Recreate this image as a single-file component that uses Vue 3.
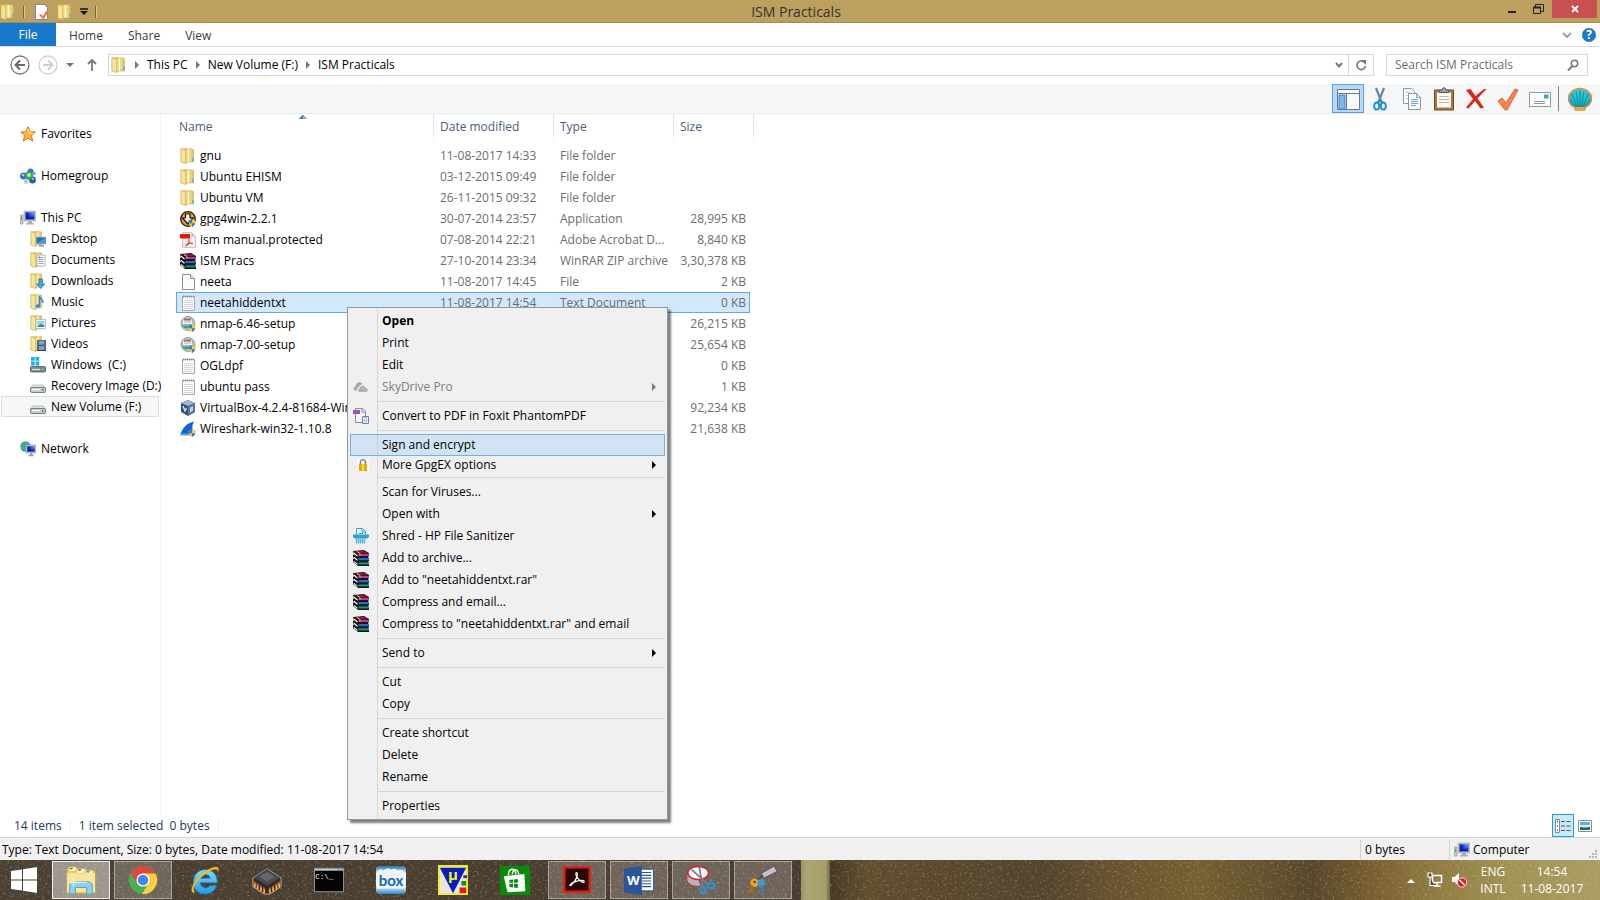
<script setup>
import { ref } from 'vue'

const search = ref('')
const selected = ref('neetahiddentxt')

const crumbs = ['This PC', 'New Volume (F:)', 'ISM Practicals']

const tools = [
  { icon: 't-layout', label: 'Layout', on: true },
  { icon: 't-cut', label: 'Cut' },
  { icon: 't-copy', label: 'Copy' },
  { icon: 't-paste', label: 'Paste' },
  { icon: 't-delete', label: 'Delete' },
  { icon: 't-check', label: 'Properties' },
  { icon: 't-mail', label: 'E-mail' }
]

const tree = [
  { name: 'Favorites', icon: 'star', group: true },
  { name: 'Homegroup', icon: 'homegroup', group: true },
  { name: 'This PC', icon: 'pc', group: true },
  { name: 'Desktop', icon: 'f-desktop' },
  { name: 'Documents', icon: 'f-docs' },
  { name: 'Downloads', icon: 'f-down' },
  { name: 'Music', icon: 'f-music' },
  { name: 'Pictures', icon: 'f-pics' },
  { name: 'Videos', icon: 'f-video' },
  { name: 'Windows  (C:)', icon: 'drive-win' },
  { name: 'Recovery Image (D:)', icon: 'drive' },
  { name: 'New Volume (F:)', icon: 'drive', current: true },
  { name: 'Network', icon: 'network', group: true }
]

const files = [
  { name: 'gnu', icon: 'folder', date: '11-08-2017 14:33', type: 'File folder', size: '' },
  { name: 'Ubuntu EHISM', icon: 'folder', date: '03-12-2015 09:49', type: 'File folder', size: '' },
  { name: 'Ubuntu VM', icon: 'folder', date: '26-11-2015 09:32', type: 'File folder', size: '' },
  { name: 'gpg4win-2.2.1', icon: 'gpg', date: '30-07-2014 23:57', type: 'Application', size: '28,995 KB' },
  { name: 'ism manual.protected', icon: 'pdf', date: '07-08-2014 22:21', type: 'Adobe Acrobat D...', size: '8,840 KB' },
  { name: 'ISM Pracs', icon: 'rar', date: '27-10-2014 23:34', type: 'WinRAR ZIP archive', size: '3,30,378 KB' },
  { name: 'neeta', icon: 'file', date: '11-08-2017 14:45', type: 'File', size: '2 KB' },
  { name: 'neetahiddentxt', icon: 'text', date: '11-08-2017 14:54', type: 'Text Document', size: '0 KB' },
  { name: 'nmap-6.46-setup', icon: 'nmap', date: '', type: '', size: '26,215 KB' },
  { name: 'nmap-7.00-setup', icon: 'nmap', date: '', type: '', size: '25,654 KB' },
  { name: 'OGLdpf', icon: 'text', date: '', type: '', size: '0 KB' },
  { name: 'ubuntu pass', icon: 'text', date: '', type: '', size: '1 KB' },
  { name: 'VirtualBox-4.2.4-81684-Win', icon: 'vbox', date: '', type: '', size: '92,234 KB' },
  { name: 'Wireshark-win32-1.10.8', icon: 'shark', date: '', type: '', size: '21,638 KB' }
]

const menu = [
  [
    { label: 'Open', bold: true },
    { label: 'Print' },
    { label: 'Edit' },
    { label: 'SkyDrive Pro', icon: 'cloud', sub: true, disabled: true }
  ],
  [{ label: 'Convert to PDF in Foxit PhantomPDF', icon: 'foxit' }],
  [
    { label: 'Sign and encrypt', active: true },
    { label: 'More GpgEX options', icon: 'lock', sub: true, short: true }
  ],
  [
    { label: 'Scan for Viruses...' },
    { label: 'Open with', sub: true },
    { label: 'Shred - HP File Sanitizer', icon: 'shred' },
    { label: 'Add to archive...', icon: 'rar' },
    { label: 'Add to "neetahiddentxt.rar"', icon: 'rar' },
    { label: 'Compress and email...', icon: 'rar' },
    { label: 'Compress to "neetahiddentxt.rar" and email', icon: 'rar' }
  ],
  [{ label: 'Send to', sub: true }],
  [{ label: 'Cut' }, { label: 'Copy' }],
  [{ label: 'Create shortcut' }, { label: 'Delete' }, { label: 'Rename' }],
  [{ label: 'Properties' }]
]

const apps = [
  { icon: 'a-explorer', label: 'File Explorer', state: 'front' },
  { icon: 'a-chrome', label: 'Chrome', state: 'open' },
  { icon: 'a-ie', label: 'Internet Explorer' },
  { icon: 'a-chip', label: 'Chip' },
  { icon: 'a-cmd', label: 'Command Prompt', text: 'C:\\_', x: 11, y: 15, cls: 'txt-cmd' },
  { icon: 'a-box', label: 'Box', text: 'box', x: 16, y: 22, cls: 'txt-box' },
  { icon: 'a-mu', label: 'uVision', text: 'µ', x: 16, y: 16, cls: 'txt-mu' },
  { icon: 'a-store', label: 'Store' },
  { icon: 'a-acrobat', label: 'Acrobat', state: 'open' },
  { icon: 'a-word', label: 'Word', state: 'open', text: 'W', x: 10, y: 21, cls: 'txt-word' },
  { icon: 'a-snip', label: 'Snipping Tool', state: 'open' },
  { icon: 'a-keys', label: 'Kleopatra', state: 'open' }
]
</script>

<template>
  <div class="screen">
    <!-- icon sprite -->
    <svg class="sprite" width="0" height="0" aria-hidden="true">
      <defs>
        <linearGradient id="gFolder" x1="0" y1="0" x2="1" y2="0">
          <stop offset="0" stop-color="#dcbf5c" />
          <stop offset=".35" stop-color="#f8e9a2" />
          <stop offset="1" stop-color="#dcbf5c" />
        </linearGradient>
        <linearGradient id="gShell" x1="0" y1="0" x2="0" y2="1">
          <stop offset="0" stop-color="#35cfdc" />
          <stop offset="1" stop-color="#12a3b8" />
        </linearGradient>
        <linearGradient id="gIe" x1="0" y1="0" x2="0" y2="1">
          <stop offset="0" stop-color="#7fdcff" />
          <stop offset="1" stop-color="#1b9ce4" />
        </linearGradient>
        <linearGradient id="gBox" x1="0" y1="0" x2="0" y2="1">
          <stop offset="0" stop-color="#1c74b8" />
          <stop offset=".3" stop-color="#fff" />
          <stop offset=".75" stop-color="#d9eaf6" />
          <stop offset="1" stop-color="#2a85c7" />
        </linearGradient>
        <radialGradient id="gScreen" cx=".8" cy=".2" r="1">
          <stop offset="0" stop-color="#5c8cf5" />
          <stop offset=".6" stop-color="#0f1fc4" />
          <stop offset="1" stop-color="#0a1490" />
        </radialGradient>
      </defs>
      <symbol id="folder" viewBox="0 0 16 16">
        <path d="M1 .8h5.500v14.400L1 14z" fill="#ecd480" stroke="#cdae4a" stroke-width=".6" />
        <path d="M5 .8h7l1.500 1V14H5z" fill="url(#gFolder)" stroke="#cdae4a" stroke-width=".6" />
        <path d="M1 .8l4.500 1.700v13L1 14z" fill="#f6e59c" stroke="#d2b454" stroke-width=".6" />
        <path d="M8.500 1.500v12" stroke="#fff8d6" />
        <path d="M13 9.500v4" stroke="#45a7e6" stroke-width="1.200" />
      </symbol>
      <symbol id="star" viewBox="0 0 16 16">
        <path d="M8 .7l2.200 5 5.200.4-4 3.500 1.300 5.400L8 12.100 3.300 15l1.300-5.400-4-3.500 5.200-.4z" fill="#fdb53a" stroke="#d9761a" />
        <path d="M8 3l1.300 4 4 .3" stroke="#ffe9a0" fill="none" />
      </symbol>
      <symbol id="homegroup" viewBox="0 0 16 16">
        <circle cx="3.500" cy="8" r="3.500" fill="#3a6fd0" /><circle cx="12.500" cy="12" r="3.400" fill="#2c55b8" />
        <circle cx="10.500" cy="3.500" r="3" fill="#3a78c8" /><circle cx="6" cy="13.500" r="2.300" fill="#a9c8ee" />
        <circle cx="9" cy="7.500" r="4.200" fill="#2fab3e" /><circle cx="9" cy="7" r="2" fill="#c4f0b5" />
        <circle cx="3" cy="7" r="1.300" fill="#a9c8f8" /><circle cx="13" cy="11" r="1.200" fill="#8fb0ef" />
        <circle cx="14" cy="5.500" r="1.800" fill="#6fa0e6" />
      </symbol>
      <symbol id="pc" viewBox="0 0 16 16">
        <path d="M0 5h3v9H0z" fill="#c9ced2" stroke="#878d92" stroke-width=".6" /><path d="M1 6.500h1v4H1z" fill="#39c239" />
        <path d="M4 1h12v10H4z" fill="#c8ccd1" stroke="#9aa0a6" stroke-width=".6" />
        <path d="M5.500 2.300h9v7.200h-9z" fill="url(#gScreen)" /><path d="M8 11h4v2h2v1.500H6V13h2z" fill="#a9aeb4" />
      </symbol>
      <symbol id="network" viewBox="0 0 16 16">
        <circle cx="5.500" cy="5.500" r="5.200" fill="#2f9fe0" /><path d="M2 2c3-2 5 0 3 2s1 4-1 6S0 6 2 2z" fill="#3cb54a" />
        <path d="M6 4h10v8H6z" fill="#c8ccd1" stroke="#8d9399" stroke-width=".6" /><path d="M7.200 5.200h7.600v5.500H7.200z" fill="url(#gScreen)" />
        <path d="M10 12h2.500v2H14v1.300H8.500V14H10z" fill="#9aa0a6" />
      </symbol>
      <symbol id="half" viewBox="0 0 16 16">
        <path d="M1 .8h5.500v14.400L1 14z" fill="#ecd480" stroke="#cdae4a" stroke-width=".6" />
        <path d="M5 .8h6.500V14H5z" fill="url(#gFolder)" stroke="#cdae4a" stroke-width=".6" />
        <path d="M1 .8l4.500 1.700v13L1 14z" fill="#f6e59c" stroke="#d2b454" stroke-width=".6" />
      </symbol>
      <symbol id="f-desktop" viewBox="0 0 16 16">
        <use href="#half" /><path d="M6 6h10v7H6z" fill="#2f6fb2" stroke="#b9c6d4" stroke-width=".8" /><path d="M7 12l8-5v5z" fill="#4f96d8" /><path d="M9 14h5v1.500H9z" fill="#8a949e" />
      </symbol>
      <symbol id="f-docs" viewBox="0 0 16 16">
        <use href="#half" /><path d="M7 3h8v11H7z" fill="#fff" stroke="#8d99a6" stroke-width=".7" /><path d="M8.500 7.500h5M8.500 9.500h5M8.500 11.500h5M11 5.500h2.500" stroke="#7d9cc0" stroke-width=".9" /><path d="M8.500 4.500h2v2h-2z" fill="#3f8ad6" />
      </symbol>
      <symbol id="f-down" viewBox="0 0 16 16">
        <use href="#half" /><path d="M9 6h3.500v5H15l-4.300 4.500L6.500 11H9z" fill="#3ba5ea" stroke="#1b6fb5" stroke-width=".7" />
      </symbol>
      <symbol id="f-music" viewBox="0 0 16 16">
        <use href="#half" /><path d="M9.500 2v9M9.500 3c1 2 4 2 3.500 6" stroke="#2c8de0" stroke-width="1.600" fill="none" /><ellipse cx="8" cy="12" rx="2.300" ry="1.800" fill="#2c8de0" />
      </symbol>
      <symbol id="f-pics" viewBox="0 0 16 16">
        <use href="#half" /><path d="M6 4.500h9.500v9H6z" fill="#fff" stroke="#9aa7b3" stroke-width=".7" /><path d="M7.300 6h7v6h-7z" fill="#8fd0f5" /><path d="M7.300 12l3-3 4 1.500V12z" fill="#3f8f6b" />
      </symbol>
      <symbol id="f-video" viewBox="0 0 16 16">
        <use href="#half" /><path d="M7 4h9v11H7z" fill="#333c46" /><path d="M9 4.500h5v4.300H9zM9 9.800h5V14H9z" fill="#6fa6d8" /><path d="M8 4.500v10M15 4.500v10" stroke="#fff" stroke-width=".9" stroke-dasharray="1 1" />
      </symbol>
      <symbol id="drive" viewBox="0 0 16 16">
        <path d="M3 7h10l2.500 3H.5z" fill="#dfe1e3" stroke="#9fa3a7" stroke-width=".6" /><rect x=".5" y="9.500" width="15" height="5" rx="1.500" fill="#c9cccf" stroke="#6f7478" stroke-width=".9" />
        <path d="M2 11.500h8" stroke="#f5f5f5" stroke-width="1.200" /><path d="M12 11h1.600v2H12z" fill="#22b422" />
      </symbol>
      <symbol id="drive-win" viewBox="0 0 16 16">
        <rect x=".5" y="9.500" width="15" height="5.500" rx="1" fill="#7f8b93" stroke="#4c565d" stroke-width=".8" /><path d="M2 12.500h8" stroke="#cfe3ec" stroke-width="1.200" /><path d="M12 11.500h1.600v2H12z" fill="#3adf5a" />
        <path d="M1 0h3.700v3.800H1zM5.500 0h3.700v3.800H5.500zM1 4.600h3.700v3.800H1zM5.500 4.600h3.700v3.800H5.500z" fill="#17b5ee" />
      </symbol>
      <symbol id="gpg" viewBox="0 0 16 16">
        <circle cx="8" cy="8" r="7.300" fill="#f39a1d" stroke="#1d1508" stroke-width="1.300" /><path d="M5.500 3h4.500v4h3l-5.200 6L2.500 7h3z" fill="#fff" stroke="#111" stroke-width="1.200" />
        <use href="#shield" />
      </symbol>
      <symbol id="shield" viewBox="0 0 16 16">
        <path d="M12 8.500l3.500 1c0 3-1 5-3.500 6.400-2.500-1.400-3.500-3.400-3.500-6.400z" fill="#f7c52c" /><path d="M12 8.500v3.700H8.800c-.2-.9-.3-1.700-.3-2.700zM12 12.200h3.200c-.5 1.700-1.500 2.800-3.200 3.700z" fill="#2d7fd8" />
      </symbol>
      <symbol id="pdf" viewBox="0 0 16 16">
        <path d="M2.500.5h9L15.500 4.500v11h-13z" fill="#efefef" stroke="#c8c8c8" /><path d="M11.500.5v4h4z" fill="#bdbdbd" /><path d="M0 2h10v4.500H0z" fill="#e0170e" />
        <path d="M8.800 7c1 4-1 6-2.800 6.500 1-2.500 5-2.800 7-2" stroke="#e0352a" fill="none" stroke-width="1.200" />
      </symbol>
      <symbol id="rar" viewBox="0 0 16 16">
        <path d="M0 1l11-1 5 3v3l-1 1 1 2v2l-1 1 1 1v3H5L0 12V9l1-.5L0 7V5l1-.5z" fill="#15151a" />
        <path d="M1 1.500L11 .6 15 3H5z" fill="#8b1247" /><path d="M5.500 3.800H16v2.200H5.500z" fill="#c4398a" /><path d="M5.500 8H16v2.200H5.500z" fill="#1f6fc9" /><path d="M5.500 12.400H16v2H5.500z" fill="#12a06a" />
        <path d="M.8 3l3.700 3M.8 7.300l3.700 3M.8 11.400l3.700 3" stroke="#fff" stroke-width="1.100" /><path d="M4 1.500l3 2v2" stroke="#e6d430" fill="none" />
      </symbol>
      <symbol id="file" viewBox="0 0 16 16">
        <path d="M2.500.5h8L14.500 4.500v11h-12z" fill="#fcfcfc" stroke="#8e8e8e" /><path d="M10.500.5v4h4" fill="#eee" stroke="#8e8e8e" />
      </symbol>
      <symbol id="text" viewBox="0 0 16 16">
        <path d="M2.500 1.500h12v14h-12z" fill="#fbfbfb" stroke="#a8a8a8" /><path d="M4 5.500h9M4 7.500h9M4 9.500h9M4 11.500h9M4 13.500h9" stroke="#c5cbd0" stroke-width=".8" /><path d="M3 1.500h11" stroke="#8b8b8b" stroke-width="2" stroke-dasharray="1 1" />
      </symbol>
      <symbol id="nmap" viewBox="0 0 16 16">
        <circle cx="8" cy="7.500" r="7" fill="#b9cfc3" stroke="#8aa5a0" /><path d="M3 2.500h9l1 6H2z" fill="#f4f6f4" stroke="#8d9a9f" stroke-width=".7" /><path d="M4 3.800h7" stroke="#b33d32" stroke-width="1.300" /><path d="M4 6h7" stroke="#a9b2b5" /><path d="M2 9.500h8c-1 4-6 4-8 0z" fill="#3f9f83" /><use href="#shield" />
      </symbol>
      <symbol id="vbox" viewBox="0 0 16 16">
        <path d="M1 3l7-3 7 3v9l-7 4-7-4z" fill="#33527f" /><path d="M1 3l7-3 7 3-7 3z" fill="#a3b6cf" /><path d="M8 6v10l7-4V3z" fill="#5977a3" /><path d="M3 6l2 5 1.500-3" stroke="#e3ebf5" fill="none" stroke-width="1.300" /><path d="M10 7.500v5l3-2v-4z" fill="#c6d4e6" />
      </symbol>
      <symbol id="shark" viewBox="0 0 16 16">
        <path d="M.5 14C2 7 7 2 14 .5c-2.500 4-2 9 1 13.500z" fill="#1462d6" /><path d="M.5 12.500h14v2H.5z" fill="#4aa8ef" /><use href="#shield" />
      </symbol>
      <symbol id="cloud" viewBox="0 0 16 16">
        <path d="M3 11.500c-3 0-3.200-3.600-.6-4C3 3 7.500 2 9.500 5 6 6 6.500 8 5 8.500 3.800 9 3.700 11 4.500 11.500z" fill="#a8a8a8" /><path d="M6.500 13c-2.200-.4-2-3 .2-3.500C7 6 11.500 5.500 12.500 8.700c3 0 3 4.300.5 4.300z" fill="#b2b2b2" />
      </symbol>
      <symbol id="foxit" viewBox="0 0 16 16">
        <path d="M2.500.5h7L12.500 3v11.500h-10z" fill="#f4f4f8" stroke="#8c8ca0" /><path d="M9 1v3h3.500" fill="none" stroke="#8c8ca0" /><path d="M0 2h7v4H0z" fill="#9d52ac" /><path d="M9.500 8.500h6v7h-6z" fill="#e9edf5" stroke="#7484a3" /><path d="M11 8h3v1.500h-3z" fill="#7484a3" /><path d="M11.500 11v3M13.500 11v3" stroke="#a9b3c9" />
      </symbol>
      <symbol id="lock" viewBox="0 0 16 16">
        <path d="M4 2h12v12H4z" fill="#fafafa" /><path d="M7.500 8V5c0-3 5-3 5 0v3" fill="none" stroke="#8d8d8d" stroke-width="1.600" /><path d="M6 7h8v7H6z" fill="#e2a90c" /><path d="M9 7h2v7H9z" fill="#f9d640" />
      </symbol>
      <symbol id="shred" viewBox="0 0 16 16">
        <path d="M3.500 6.500v-6h6l3 3v3" fill="#e9f6fc" stroke="#2aa2d6" /><path d="M9 1v3h3" fill="none" stroke="#2aa2d6" /><path d="M6 5.500h4" stroke="#2aa2d6" /><path d="M0 6.500h16V9l-2 1.500H2L0 9z" fill="#2aa2d6" /><path d="M3.500 10.500v5M5.500 10.500v5M7.500 10.500v5M9.500 10.500v5M11.500 10.500v5" stroke="#58b8e0" stroke-width="1.500" />
      </symbol>

      <symbol id="t-layout" viewBox="0 0 24 24">
        <path d="M1.500 2.500h22v20h-22z" fill="#f7f9fb" stroke="#6b7784" /><path d="M2 6.500h21" stroke="#6b7784" /><path d="M3 8h6v14H3z" fill="#7db8f3" stroke="#3d83d1" /><path d="M10.500 7v15" stroke="#6b7784" />
      </symbol>
      <symbol id="t-cut" viewBox="0 0 24 24">
        <path d="M8 1l5.500 14M16 1l-5.500 14" stroke="#6d879f" stroke-width="2.200" /><ellipse cx="8.700" cy="19" rx="2.500" ry="3.500" fill="none" stroke="#1d94dc" stroke-width="2" /><ellipse cx="15.300" cy="19" rx="2.500" ry="3.500" fill="none" stroke="#1d94dc" stroke-width="2" /><path d="M9.500 16l2.500-3 2.500 3" stroke="#1d94dc" stroke-width="2" fill="none" />
      </symbol>
      <symbol id="t-copy" viewBox="0 0 24 24">
        <path d="M3.500 1.500h8l3 3v12h-11z" fill="#fbfcfd" stroke="#8a99a8" /><path d="M6 5.500h4M6 8.500h6M6 11.500h6" stroke="#b5c2cf" /><path d="M8.500 6.500h8l4 4v12h-12z" fill="#fbfcfd" stroke="#8a99a8" /><path d="M16.500 6.500v4h4" fill="none" stroke="#8a99a8" /><path d="M11 12.500h7M11 14.500h7M11 16.500h7M11 18.500h5" stroke="#6fa5d8" />
      </symbol>
      <symbol id="t-paste" viewBox="0 0 24 24">
        <path d="M2.500 3h19v20h-19z" fill="#a8783c" stroke="#6e4a1d" /><path d="M5 5.500h14v15H5z" fill="#fdf9ee" /><path d="M7 9.500h10M7 12.500h10M7 15.500h10" stroke="#b9b9b9" /><path d="M7 5.500V3h3c0-3 4-3 4 0h3v2.500z" fill="#9ba3a8" stroke="#555d62" />
      </symbol>
      <symbol id="t-delete" viewBox="0 0 24 24">
        <path d="M2 3l4.500-1 5 7L20 2h2.500l-9 9.500 6.500 9-3.500 1-5.500-7.500-6.500 7.500L2 20.500l7-8.500z" fill="#d8281b" />
      </symbol>
      <symbol id="t-check" viewBox="0 0 24 24">
        <path d="M2 14l4-3 4 5L19 2l3 1-11 20H9z" fill="#f28550" stroke="#dc6730" />
      </symbol>
      <symbol id="t-mail" viewBox="0 0 24 24">
        <path d="M1.500 5.500h21v14h-21z" fill="#fdfdfd" stroke="#8e979f" /><path d="M16 7.500h4.500v4H16z" fill="#3ca6c9" /><path d="M6 14.500h11M6 16.500h11" stroke="#8e979f" />
      </symbol>
      <symbol id="t-shell" viewBox="0 0 24 24">
        <path d="M12 1.500C19 1.500 24 7 23.500 12c-.3 4-3 7-6 8l-1 3h-9l-1-3C3 19 .8 16 .5 12 0 7 5 1.500 12 1.500z" fill="url(#gShell)" stroke="#f08a35" stroke-width="1.400" />
        <path d="M12 3v17M8 4l2.500 16M4 7l5 13M1.500 12l6 8M16 4l-2.500 16M20 7l-5 13M22.500 12l-6 8" stroke="#0e8496" stroke-width=".8" fill="none" /><path d="M7 20h10l-1 3H8z" fill="#f3a04c" />
      </symbol>

      <symbol id="a-explorer" viewBox="0 0 32 32">
        <path d="M1 4h9l2 2h19v24H1z" fill="#f0d67a" stroke="#caa640" /><path d="M3 2h8v5H3zM11 4h10v5H11zM20 6h9v5h-9z" fill="#fff3bd" stroke="#d5b85a" stroke-width=".7" />
        <path d="M4 3h3v1.500H4z" fill="#20a030" /><path d="M13 4.500h3V6h-3z" fill="#d33" /><path d="M22 6.500h3V8h-3z" fill="#28d" /><path d="M1 9h30v20H1z" fill="#f9e9a3" opacity=".85" />
        <path d="M4 31v-9c0-3 2-4 5-4h14c3 0 5 1 5 4v9h-6v-7H10v7z" fill="#8fd0ee" stroke="#4c9fc9" /><path d="M5 20c1-1 2-1.500 4-1.500h13" stroke="#e4f6ff" fill="none" /><path d="M8 14v9M3.500 18.500h9" stroke="#fff" />
      </symbol>
      <symbol id="a-chrome" viewBox="0 0 32 32">
        <circle cx="16" cy="16" r="15" fill="#4bae50" />
        <path d="M16 16L3 8.500A15 15 0 0 1 29 8.500z" fill="#dc4a3d" />
        <path d="M16 9h13.300A15 15 0 0 1 15 31l7.200-12z" fill="#fccd3f" />
        <path d="M3 8.500l6.800 11.300L12 10z" fill="#dc4a3d" />
        <circle cx="16" cy="16" r="7" fill="#fff" /><circle cx="16" cy="16" r="5.600" fill="#4286f0" />
      </symbol>
      <symbol id="a-ie" viewBox="0 0 32 32">
        <path d="M29 19H11c.3 6 8 7 10 3h7c-2 6-6 9-12 9C8 31 3 25 3.500 18 4 10 9 5 16 5c9 0 13.500 6 13 14zM11 14h10.500c-.3-5-10-5-10.500 0z" fill="url(#gIe)" stroke="#147ec4" stroke-width=".8" />
        <path d="M4 30c-6-3 2-16 12-23C25 1 32 0 30 7c0-4-6-3-13 2C7 16 1 26 5 28" fill="#f7c32b" stroke="#d89f14" stroke-width=".5" />
      </symbol>
      <symbol id="a-chip" viewBox="0 0 32 32">
        <path d="M1 14L16 4l15 10v9L19 31h-6L1 23z" fill="#3a2a20" stroke="#e9dfc8" stroke-width=".8" />
        <path d="M3 17v7M6 19v7M9.500 21v7M13 23v7M19 23v7M22.500 21v7M26 19v7M29 17v7" stroke="#f6b04a" stroke-width="2" /><path d="M3 17v3M6 19v3M9.500 21v3M13 23v3M19 23v3M22.500 21v3M26 19v3M29 17v3" stroke="#c24f22" stroke-width="2" />
        <path d="M2 14L16 4.500 30 14v3l-14 9-14-9z" fill="#2b2c2f" /><path d="M2 13.500l14-9 14 9-14 8.500z" fill="#47494d" /><path d="M8 12.500l8-5 8 5-8 5z" fill="#64676c" />
      </symbol>
      <symbol id="a-cmd" viewBox="0 0 32 32">
        <path d="M.5 3.500h31v25H.5z" fill="#050505" stroke="#9b9b9b" /><path d="M1 4h30v2H1z" fill="#c9d2de" /><path d="M25 5h5" stroke="#3b6fc0" stroke-dasharray="1 1" />
      </symbol>
      <symbol id="a-box" viewBox="0 0 32 32">
        <rect x="0" y="1" width="32" height="30" rx="4" fill="url(#gBox)" /><path d="M1 8c1-4 5-4 7-2 2-3 6-3 8-1 3-2 6-1 7 1 4-2 7 0 8 3v16H1z" fill="#eef6fb" />
      </symbol>
      <symbol id="a-mu" viewBox="0 0 32 32">
        <path d="M1 1h30v30H1z" fill="#e6e6e6" stroke="#f2ee10" stroke-width="2" /><path d="M2 3h28L16 30z" fill="#0a1cc0" />
        <path d="M27 11h4v3h-4z" fill="#5a12b0" /><path d="M25 17h5v5h-5z" fill="#18901c" /><path d="M23 24h7v6h-7z" fill="#f01010" />
      </symbol>
      <symbol id="a-store" viewBox="0 0 32 32">
        <path d="M0 1h32v31H0z" fill="#0a8a0a" /><path d="M4 12l22-2.500L27 28 8 29z" fill="#fff" /><path d="M9 11c0-8 7-9 8-1M13 10c1-7 6-6 7 0" stroke="#fff" stroke-width="1.500" fill="none" />
        <path d="M10 16l4-.5V19h-4zM15 15.400l4-.6V19h-4zM10 20h4v4l-4-.5zM15 20h4v4.600l-4-.5z" fill="#0a8a0a" />
      </symbol>
      <symbol id="a-acrobat" viewBox="0 0 32 32">
        <path d="M2.500 2.500h27v26h-27z" fill="#2a0707" stroke="#e31e10" stroke-width="2.500" /><path d="M15.500 8c2 0 1 7-5 13-3 3-3-1 3-3s11-2 10 0-6-2-8-6c-1-2-1-4 0-4z" fill="none" stroke="#fff" stroke-width="1.300" />
      </symbol>
      <symbol id="a-word" viewBox="0 0 32 32">
        <path d="M17 4.500h14.500v23H17z" fill="#fff" stroke="#2a5699" /><path d="M19 8h10M19 11h10M19 14h10M19 17h10M19 20h10M19 23h10" stroke="#2a5699" stroke-width="1.200" /><path d="M0 4l19-3v31L0 29z" fill="#2a5699" />
      </symbol>
      <symbol id="a-snip" viewBox="0 0 32 32">
        <path d="M1 10v6c1 5 8 8 15 6l-3-8z" fill="#b5b5b9" stroke="#d8202a" stroke-width=".8" /><ellipse cx="13" cy="8.500" rx="11" ry="7" fill="#fdfdfd" stroke="#d8202a" stroke-width="1.600" /><path d="M6 5l17 15M14 2l4 21" stroke="#777f87" stroke-width="1.800" />
        <ellipse cx="18" cy="27" rx="2.800" ry="4" fill="none" stroke="#2b93d8" stroke-width="2" /><ellipse cx="27" cy="22" rx="4" ry="2.800" fill="none" stroke="#2b93d8" stroke-width="2" />
      </symbol>
      <symbol id="a-keys" viewBox="0 0 32 32">
        <path d="M14 9L28 1l3 6-14 7z" fill="#c4c2c6" stroke="#6a4450" /><path d="M10 16l6-5" stroke="#444" stroke-width="1.500" /><circle cx="7" cy="19" r="4.500" fill="#f0a51d" /><circle cx="7" cy="18" r="1.300" fill="#5a3c08" /><path d="M5 22L1 30M3 27l3 1" stroke="#a87412" stroke-width="2.200" /><circle cx="14" cy="19" r="4" fill="#3c9ad6" /><path d="M14 22l3 9M15 27l-3 1" stroke="#3f7fae" stroke-width="2.200" />
      </symbol>
    </svg>

    <header class="title-bar">
      <div class="quick">
        <svg class="ic"><use href="#folder" /></svg>
        <span class="bar"></span>
        <button aria-label="Properties"><svg class="ic" viewBox="0 0 16 16"><path d="M1.500.5h9l3 3v12h-12z" fill="#fdfdfd" stroke="#7e8a99" /><path d="M5 11l2-1 2 2 4-6 2 .5-5.500 9z" fill="#ee7446" /></svg></button>
        <button aria-label="New folder"><svg class="ic"><use href="#folder" /></svg></button>
        <button aria-label="Customize"><svg width="8" height="8"><path d="M0 1h8" stroke="#111" stroke-width="1.500" /><path d="M0 3h8L4 7z" fill="#111" /></svg></button>
        <span class="bar"></span>
      </div>
      <h1>ISM Practicals</h1>
      <div class="win-buttons">
        <button aria-label="Minimize"><svg width="26" height="18"><path d="M8 12h8" stroke="#222" stroke-width="2" /></svg></button>
        <button aria-label="Restore"><svg width="26" height="18"><path d="M7.500 7.500h7v6h-7zM9.500 7V4.500h8v7h-3" fill="none" stroke="#222" /><path d="M7 7.500h8" stroke="#222" stroke-width="2" /></svg></button>
        <button class="close" aria-label="Close"><svg width="45" height="18"><path d="M20 6l6 6M26 6l-6 6" stroke="#fff" stroke-width="1.800" /></svg></button>
      </div>
    </header>

    <nav class="ribbon">
      <button class="file">File</button>
      <button>Home</button>
      <button>Share</button>
      <button>View</button>
      <span class="grow"></span>
      <button class="mini" aria-label="Expand the ribbon"><svg width="10" height="8"><path d="M1 2l4 4 4-4" fill="none" stroke="#a0a0a0" stroke-width="2" /></svg></button>
      <button class="mini help" aria-label="Help">?</button>
    </nav>

    <div class="address-row">
      <button aria-label="Back"><svg width="20" height="20" viewBox="0 0 20 20"><circle cx="10" cy="10" r="9" fill="none" stroke="#7a7a7a" stroke-width="1.300" /><path d="M15 10H6M10 5.500L5.500 10l4.500 4.500" fill="none" stroke="#6a6a6a" stroke-width="2" /></svg></button>
      <button aria-label="Forward" disabled><svg width="20" height="20" viewBox="0 0 20 20"><circle cx="10" cy="10" r="9" fill="none" stroke="#cfcfcf" stroke-width="1.300" /><path d="M5 10h9M10 5.500l4.500 4.500-4.500 4.500" fill="none" stroke="#cfcfcf" stroke-width="2" /></svg></button>
      <button aria-label="Recent locations"><svg width="8" height="6"><path d="M0 1h8L4 5z" fill="#777" /></svg></button>
      <button class="up" aria-label="Up"><svg width="10" height="13"><path d="M5 13V2M1 6l4-4 4 4" fill="none" stroke="#777" stroke-width="1.800" /></svg></button>
      <div class="address">
        <svg class="ic"><use href="#folder" /></svg>
        <template v-for="c in crumbs" :key="c">
          <svg class="crumb-arrow" width="5" height="8"><path d="M0 0l4 4-4 4z" fill="#777" /></svg>
          <button>{{ c }}</button>
        </template>
        <span class="grow"></span>
        <button class="drop" aria-label="Previous locations"><svg width="8" height="8"><path d="M1 2l3 3.500L7 2" fill="none" stroke="#777" stroke-width="2" /></svg></button>
        <button class="refresh" aria-label="Refresh"><svg width="12" height="12" viewBox="0 0 12 12"><path d="M9 3a4.300 4.300 0 1 0 1.500 4" fill="none" stroke="#777" stroke-width="1.600" /><path d="M6 1h5v5z" fill="#777" /></svg></button>
      </div>
      <label class="search">
        <input v-model="search" type="text" placeholder="Search ISM Practicals" aria-label="Search ISM Practicals" />
        <svg width="12" height="12" viewBox="0 0 12 12"><circle cx="7.500" cy="4.500" r="3.200" fill="none" stroke="#777" stroke-width="1.500" /><path d="M5.500 7L1 11.500" stroke="#777" stroke-width="2" /></svg>
      </label>
    </div>

    <div class="toolbar">
      <button v-for="t in tools" :key="t.icon" :class="{ on: t.on }" :aria-label="t.label">
        <svg class="ic24"><use :href="'#' + t.icon" /></svg>
      </button>
      <span class="tool-sep"></span>
      <button aria-label="Classic Shell"><svg class="ic24"><use href="#t-shell" /></svg></button>
    </div>

    <main>
      <ul class="tree">
        <li v-for="n in tree" :key="n.name" :class="{ group: n.group }">
          <button :class="{ current: n.current }">
            <svg class="ic"><use :href="'#' + n.icon" /></svg>{{ n.name }}
          </button>
        </li>
      </ul>

      <section class="listing">
        <table>
          <colgroup>
            <col class="c-name" /><col class="c-mid" /><col class="c-mid" /><col class="c-size" /><col class="c-end" />
          </colgroup>
          <thead>
            <tr>
              <th class="sorted">Name</th>
              <th>Date modified</th>
              <th>Type</th>
              <th colspan="2">Size</th>
            </tr>
          </thead>
          <tbody>
            <tr v-for="f in files" :key="f.name" :class="{ selected: f.name === selected }" @click="selected = f.name">
              <td class="name"><svg class="ic"><use :href="'#' + f.icon" /></svg><span>{{ f.name }}</span></td>
              <td>{{ f.date }}</td>
              <td>{{ f.type }}</td>
              <td class="size">{{ f.size }}</td>
            </tr>
          </tbody>
        </table>
      </section>

      <div class="menu" role="menu">
        <div v-for="(group, i) in menu" :key="i" class="menu-group">
          <button
            v-for="m in group"
            :key="m.label"
            role="menuitem"
            :disabled="m.disabled"
            :class="{ bold: m.bold, active: m.active, short: m.short }"
          >
            <span class="gutter"><svg v-if="m.icon" class="ic"><use :href="'#' + m.icon" /></svg></span>
            <span class="label">{{ m.label }}</span>
            <svg v-if="m.sub" width="5" height="8"><path d="M0 0l4 4-4 4z" fill="currentColor" /></svg>
          </button>
        </div>
      </div>
    </main>

    <div class="counts">
      <span>14 items</span>
      <span>1 item selected&nbsp; 0 bytes</span>
      <i class="grow"></i>
      <button class="on" aria-label="Details view">
        <svg width="16" height="14" viewBox="0 0 16 14"><path d="M.5.500h4v13h-4z" fill="#fff" stroke="#7f8b95" /><path d="M2 2.500h1M2 7h1M2 11.500h1" stroke="#b02a2a" stroke-width="1.500" /><path d="M6 2.500h4M11.500 2.500h4M6 7h4M11.500 7h4M6 11.500h4M11.500 11.500h4" stroke="#4d5760" /></svg>
      </button>
      <button aria-label="Large icons view">
        <svg width="14" height="12" viewBox="0 0 14 12"><path d="M.5.500h13v11H.5z" fill="#fff" stroke="#7d8ba3" /><path d="M2 2h10v8H2z" fill="#5cb1e8" /><path d="M2 5h10v2H2z" fill="#d9eef8" /><path d="M2 10V7l4 1 6-1v3z" fill="#256a57" /></svg>
      </button>
    </div>

    <footer class="status">
      <span class="grow">Type: Text Document, Size: 0 bytes, Date modified: 11-08-2017 14:54</span>
      <span class="cell bytes">0 bytes</span>
      <span class="cell zone"><svg class="ic"><use href="#pc" /></svg>Computer</span>
      <svg class="grip" width="8" height="8"><path d="M6 0h2v2H6zM3 3h2v2H3zM6 3h2v2H6zM0 6h2v2H0zM3 6h2v2H3zM6 6h2v2H6z" fill="#b5b5b5" /></svg>
    </footer>

    <div class="taskbar">
      <svg class="grain" aria-hidden="true">
        <filter id="grain" x="0" y="0" width="100%" height="100%">
          <feTurbulence type="fractalNoise" baseFrequency=".4 .45" numOctaves="2" seed="4" />
          <feColorMatrix values="0 0 0 0 .78  0 0 0 0 .64  0 0 0 0 .34  3.200 0 0 0 -1.750" />
        </filter>
        <rect width="100%" height="100%" filter="url(#grain)" />
      </svg>
      <span class="strip"></span>
      <button class="start" aria-label="Start">
        <svg width="26" height="26" viewBox="0 0 26 26"><path d="M0 4l11-1.600V12.500H0zM12 2.200L26 0v12.500H12zM0 13.500h11v10.100L0 22zM12 13.500h14V26l-14-2.200z" fill="#fff" /></svg>
      </button>
      <button v-for="a in apps" :key="a.icon" class="app" :class="a.state" :aria-label="a.label">
        <svg class="ic30" viewBox="0 0 32 32">
          <use :href="'#' + a.icon" />
          <text v-if="a.text" :class="a.cls" :x="a.x" :y="a.y" text-anchor="middle">{{ a.text }}</text>
        </svg>
      </button>
      <span class="grow"></span>
      <div class="tray">
        <svg width="8" height="5"><path d="M0 5l4-4 4 4z" fill="#fff" /></svg>
        <svg width="16" height="16" viewBox="0 0 16 16"><path d="M5.500 3.500h9v7h-9zM10 10.500v3M6.500 14h7" fill="none" stroke="#fff" stroke-width="1.500" /><path d="M1 1h4v4H1zM3 5v8.500h4" fill="#50442f" stroke="#fff" stroke-width="1.200" /></svg>
        <svg width="16" height="16" viewBox="0 0 16 16"><path d="M1 5h2.500L8 1v13L3.500 10H1z" fill="#fff" /><circle cx="11" cy="10.500" r="4.600" fill="#e3141c" stroke="#fff" stroke-width=".8" /><path d="M8.500 8l5 5" stroke="#fff" stroke-width="1.600" /></svg>
        <div class="lang"><span>ENG</span><span>INTL</span></div>
        <div class="clock"><span>14:54</span><span>11-08-2017</span></div>
      </div>
    </div>
  </div>
</template>

<style>
body {
  margin: 0;
}
</style>

<style scoped>
.screen {
  display: flex;
  flex-direction: column;
  min-height: 100vh;
  background: #fff;
  color: #000;
  font-family: "Open Sans", "Noto Sans", sans-serif;
  font-size: 12px;
  line-height: 16px;
}

.screen * {
  box-sizing: border-box;
}

button {
  display: flex;
  align-items: center;
  padding: 0;
  border: 0;
  background: none;
  color: inherit;
  font: inherit;
  white-space: pre;
}

svg {
  flex: none;
  display: block;
}

.sprite {
  position: absolute;
}

.ic {
  width: 16px;
  height: 16px;
}

.ic24 {
  width: 24px;
  height: 24px;
}

.ic30 {
  width: 30px;
  height: 30px;
}

.grow {
  flex: 1;
}

/* title bar */
.title-bar {
  display: grid;
  grid-template-columns: 1fr auto 1fr;
  height: 23px;
  background: #bda060;
  border-bottom: 1px solid #a48a50;
}

.title-bar h1 {
  margin: 0;
  padding-right: 8px;
  color: #38332a;
  font-size: 14px;
  font-weight: 400;
  line-height: 23px;
}

.quick {
  display: flex;
  align-items: center;
  gap: 7px;
}

.bar {
  width: 2px;
  height: 12px;
  background: #77653d;
  border-right: 1px solid #dcc793;
}

.bar + button {
  margin-left: 2px;
}

.win-buttons {
  display: flex;
  justify-content: flex-end;
  align-items: flex-start;
  padding-right: 3px;
}

.close {
  background: #c75050;
}

/* ribbon tabs */
.ribbon {
  display: flex;
  height: 24px;
  padding-right: 4px;
  border-bottom: 1px solid #dadbdc;
  color: #3b3b3b;
}

.ribbon button {
  padding: 2px 12px 0 13px;
}

.ribbon .file {
  width: 56px;
  padding: 0;
  justify-content: center;
  background: #1979ca;
  color: #fff;
}

.ribbon .mini {
  padding: 0;
  margin-left: 10px;
}

.ribbon .help {
  align-self: center;
  justify-content: center;
  width: 14px;
  height: 14px;
  border-radius: 50%;
  background: #1979ca;
  color: #fff;
  font-weight: 700;
}

/* address row */
.address-row {
  display: flex;
  align-items: center;
  gap: 8px;
  height: 37px;
  padding: 0 12px 2px 10px;
}

.address-row .up {
  margin: 0 3px 0 5px;
}

.address {
  display: flex;
  flex: 1;
  align-items: center;
  height: 22px;
  padding-left: 2px;
  border: 1px solid #d9d9d9;
}

.crumb-arrow {
  margin: 0 7px 0 8px;
}

.drop {
  padding: 0 5px;
}

.refresh {
  align-self: stretch;
  width: 25px;
  justify-content: center;
  border-left: 1px solid #d9d9d9;
}

.search {
  display: flex;
  align-items: center;
  width: 202px;
  height: 22px;
  margin-left: 4px;
  padding: 0 8px;
  border: 1px solid #d9d9d9;
}

.search input {
  flex: 1;
  min-width: 0;
  padding: 0;
  border: 0;
  outline: 0;
  background: none;
  font: inherit;
}

.search input::placeholder {
  color: #6d6d6d;
  opacity: 1;
}

/* toolbar */
.toolbar {
  display: flex;
  justify-content: flex-end;
  height: 30px;
  padding-right: 4px;
  background: #f5f6f7;
  border-bottom: 1px solid #e8e9eb;
}

.toolbar button {
  width: 32px;
  justify-content: center;
}

.toolbar .on {
  background: #b9d9f8;
  border: 1px solid #5c9fe6;
}

.tool-sep {
  width: 1px;
  margin: 2px 5px 2px 2px;
  background: #858585;
}

/* panes */
main {
  position: relative;
  display: flex;
  flex: 1;
}

.tree {
  width: 161px;
  margin: 0;
  padding: 9px 1px 0;
  border-right: 1px solid #f3f3f3;
  list-style: none;
}

.tree button {
  width: 100%;
  height: 21px;
  gap: 5px;
  padding-left: 28px;
  border: 1px solid transparent;
}

.tree .group button {
  padding-left: 18px;
}

.tree .group:not(:first-child) {
  margin-top: 21px;
}

.tree .current {
  background: #f7f7f7;
  border-color: #dedede;
}

.listing {
  flex: 1;
  padding-left: 15px;
}

table {
  width: 578px;
  border-collapse: separate;
  border-spacing: 0;
  table-layout: fixed;
}

.c-name {
  width: 258px;
}

.c-mid {
  width: 120px;
}

.c-size {
  width: 76px;
}

.c-end {
  width: 4px;
}

th {
  height: 31px;
  padding: 0 0 6px 6px;
  border-right: 1px solid;
  border-image: linear-gradient(#dfe6f2 50%, #fff) 1;
  color: #4c607a;
  font-weight: 400;
  text-align: left;
}

th.sorted {
  padding-left: 3px;
  background: linear-gradient(135deg, transparent 50%, #4f86ab 50%) 123px 1px / 4px 4px no-repeat,
    linear-gradient(225deg, transparent 50%, #7fb6da 50%) 127px 1px / 4px 4px no-repeat;
}

td {
  height: 21px;
  padding: 0 0 0 6px;
  border: solid transparent;
  border-width: 1px 0;
  color: #6d6d6d;
  white-space: nowrap;
}

.name {
  display: flex;
  align-items: center;
  gap: 4px;
  padding-left: 3px;
  border-left-width: 1px;
  color: #000;
}

.size {
  padding: 0 3px 0 0;
  border-right-width: 1px;
  text-align: right;
}

.selected td {
  background: #d1e8ff;
  border-color: #66a7e8;
}

/* context menu */
.menu {
  position: absolute;
  left: 347px;
  top: 193px;
  width: 321px;
  padding: 2px;
  border: 1px solid #979797;
  background: linear-gradient(90deg, transparent 29px, #d7d7d7 29px, #d7d7d7 30px, transparent 30px) #f0f0f0;
  box-shadow: 3px 3px 2px rgba(0, 0, 0, 0.5);
}

.menu-group + .menu-group::before {
  content: "";
  display: block;
  height: 1px;
  margin: 3px 0 3px 28px;
  background: #d7d7d7;
}

.menu button {
  width: 100%;
  height: 22px;
  padding: 0 7px 0 4px;
  border: 1px solid transparent;
}

.menu .short {
  height: 18px;
}

.menu .bold {
  font-weight: 700;
}

.menu .active {
  background: rgba(120, 190, 250, 0.25);
  border-color: #78aee5;
}

.menu button:disabled {
  color: #7d7d7d;
}

.gutter {
  width: 27px;
  margin-left: -2px;
}

.label {
  flex: 1;
  padding-left: 2px;
  text-align: left;
}

/* item counts */
.counts {
  display: flex;
  align-items: center;
  height: 23px;
  padding-right: 4px;
  color: #1e395b;
}

.counts span {
  margin-left: 14px;
  padding-right: 8px;
  border-right: 1px solid #f0f0f0;
  line-height: 12px;
}

.counts span + span {
  margin-left: 8px;
}

.counts button {
  width: 22px;
  height: 23px;
  justify-content: center;
}

.counts .on {
  background: #cbe8f6;
  border: 1px solid #26a0da;
}

/* status bar */
.status {
  display: flex;
  align-items: center;
  height: 23px;
  padding: 1px 3px 0 2px;
  border-top: 1px solid #d5d5d5;
  background: #f0f0f0;
}

.cell {
  display: flex;
  align-items: center;
  gap: 3px;
  height: 20px;
  padding-left: 4px;
  border-left: 1px solid #d3d3d3;
}

.bytes {
  width: 89px;
}

.zone {
  width: 140px;
}

.grip {
  align-self: flex-end;
  margin-bottom: 2px;
}

/* taskbar */
.taskbar {
  position: relative;
  display: flex;
  gap: 4px;
  height: 40px;
  padding: 1px 15px 1px 0;
  background: linear-gradient(90deg, #4b4033 0, #493d30 50%, #463a26 52%, #5f4d30 54%, #57472f 62%, #52442f 65%, #6a5430 70%, #755f32 75%, #57472d 82%, #72592f 85%, #8c7640 89%, #a09253 94%, #a99d62 100%);
  color: #fff;
}

.grain {
  position: absolute;
  inset: 0;
  width: 100%;
  height: 100%;
  opacity: 0.3;
}

.strip {
  position: absolute;
  top: 0;
  bottom: 0;
  left: 801px;
  width: 29px;
  background: linear-gradient(90deg, #9c9460, #aea670 20%, #a79f6b 85%, #6f6540);
}

.start {
  width: 48px;
  justify-content: center;
}

.app {
  width: 58px;
  justify-content: center;
  border: 1px solid transparent;
}

.start,
.app,
.tray {
  position: relative;
}

.open {
  background: rgba(255, 255, 255, 0.2);
  border-color: rgba(255, 255, 255, 0.4);
}

.front {
  background: rgba(255, 255, 255, 0.45);
  border-color: #f0eeea;
}

.txt-cmd {
  fill: #fff;
  font: 8px "Liberation Mono", monospace;
}

.txt-box {
  fill: #1669ab;
  font: 700 16px Lato, sans-serif;
}

.txt-mu {
  fill: #f7ef1a;
  font: 700 16px "Open Sans", sans-serif;
}

.txt-word {
  fill: #fff;
  font: 700 14px "Open Sans", sans-serif;
}

.tray {
  display: flex;
  align-items: center;
}

.tray svg + svg {
  margin-left: 12px;
}

.tray svg + svg + svg {
  margin-left: 8px;
}

.lang,
.clock {
  display: flex;
  flex-direction: column;
  align-items: center;
  line-height: 17px;
}

.lang {
  width: 52px;
}

.clock {
  width: 66px;
}
</style>
